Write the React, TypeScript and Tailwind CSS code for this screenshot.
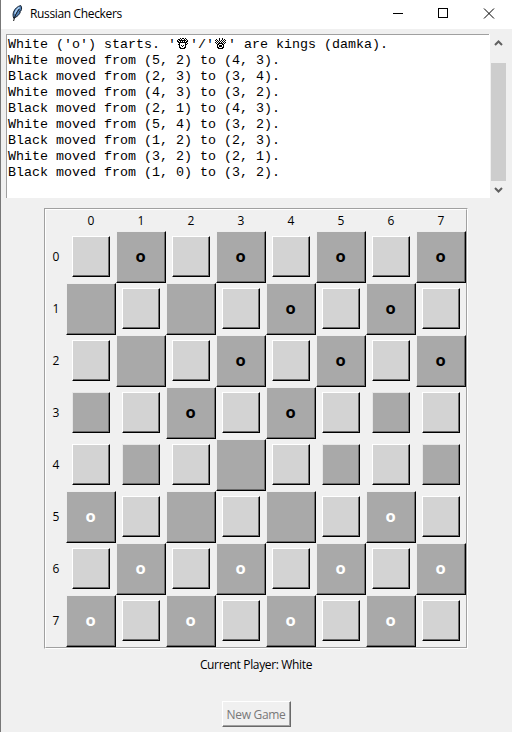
import React from "react";

const moves = [
  "White moved from (5, 2) to (4, 3).",
  "Black moved from (2, 3) to (3, 4).",
  "White moved from (4, 3) to (3, 2).",
  "Black moved from (2, 1) to (4, 3).",
  "White moved from (5, 4) to (3, 2).",
  "Black moved from (1, 2) to (2, 3).",
  "White moved from (3, 2) to (2, 1).",
  "Black moved from (1, 0) to (3, 2).",
];

// "." light square, "s" untouched dark square, "e" emptied dark square, "b"/"w" pieces
const board = [
  ".b.b.b.b",
  "e.e.b.b.",
  ".e.b.b.b",
  "s.b.b.s.",
  ".s.e.s.s",
  "w.e.e.w.",
  ".w.w.w.w",
  "w.w.w.w.",
];

function Pixels({ rows }: { rows: string[] }) {
  const d = rows
    .flatMap((row, y) => [...row].map((c, x) => (c === "#" ? `M${x} ${y}h1v1h-1z` : "")))
    .join("");
  return (
    <svg width={rows[0].length} height={rows.length} shapeRendering="crispEdges" className="block">
      <path d={d} fill="#000" />
    </svg>
  );
}

const whiteKing = [
  "...#.##.#..",
  ".##.#..#.#.",
  "#.#######.#",
  "##.#.#.#.##",
  ".#########.",
  "..#.....#.#",
  ".##.....##.",
  "..#.#.#.#..",
  "..#..#..#..",
  "..##...##..",
  "...#####...",
];

const blackKing = [
  "....#..#...",
  ".#..#..#.#.",
  "#.#.#.#.#.#",
  ".#.#.#.#.#.",
  "#.#.#.#.#.#",
  ".#.#####.#.",
  "..##...##..",
  "..#.###.#..",
  "..#.###.#..",
  "..##...##..",
  "...#####...",
];

function Feather() {
  return (
    <svg width="12" height="17" viewBox="0 0 12 17" className="block">
      <path d="M9.8.6C6.8 1 3.5 4 2.5 7.2c-.7 2.2-.5 4.2.2 6C6 12 8.8 9.4 9.3 6.8L8.5 6.5l1.6-.8C10.8 4 10.8 1.700 9.800.6Z" fill="#4f7fb5" stroke="#15202d" strokeWidth="1" />
      <path d="M8.500 2.200C6.500 3.500 4.500 6.500 4 9" fill="none" stroke="#a9cdf0" strokeWidth="1.400" />
      <path d="M8.300 4C5.800 7 3.600 11 2.600 16" fill="none" stroke="#111" strokeWidth="1" />
    </svg>
  );
}

function Square({ kind }: { kind: string }) {
  if (kind === "." || kind === "s") {
    const light = kind === ".";
    return (
      <div className="h-[52px] w-[50px] pl-[6px] pt-[5px]">
        <div className={`h-[41px] w-[38px] border border-r-black border-b-black ${light ? "border-t-white border-l-white" : "border-t-[#e6e6e6] border-l-[#e6e6e6]"}`}>
          <div className={`h-full w-full border-r border-b border-[#696969] ${light ? "bg-[#d3d3d3]" : "bg-[#a9a9a9]"}`} />
        </div>
      </div>
    );
  }
  return (
    <div className="h-[52px] w-[50px] border border-t-[#eeeeee] border-r-black border-b-black border-l-[#eeeeee]">
      <div className={`flex h-full w-full items-center justify-center border-r border-b border-[#696969] bg-[#a9a9a9] font-['Open_Sans',sans-serif] text-[16.5px] leading-[20px] font-bold ${kind === "w" ? "text-white" : "text-black"}`}>
        {kind !== "e" && <span className="-mt-px">o</span>}
      </div>
    </div>
  );
}

export default function App() {
  return (
    <div className="flex h-[732px] w-[512px] flex-col overflow-hidden border-l border-[#777777] bg-[#f0f0f0] font-['Open_Sans',sans-serif] text-[12px] text-black">
      <header className="flex h-[29px] shrink-0 items-center bg-white pl-[10px]">
        <div className="-mt-[3px]"><Feather /></div>
        <span className="-mt-px ml-[7px] w-[94px] whitespace-nowrap tracking-[-0.35px]">Russian Checkers</span>
        <svg width="120" height="29" viewBox="0 0 120 29" className="ml-[262px] block" fill="none" stroke="#000" strokeWidth="1">
          <path d="M7 13.500h10M52.500 8.500h9v9h-9z" shapeRendering="crispEdges" />
          <path d="M98 8.500l10 10M108 8.500l-10 10" />
        </svg>
      </header>

      <section className="mt-[5px] ml-[5px] flex h-[164px] shrink-0">
        <div className="w-[483px] overflow-hidden border-t border-l border-[#a0a0a0] bg-white pt-[2px] pl-px font-['Liberation_Mono',monospace] text-[13.333px] leading-[16px] whitespace-pre">
          <div className="flex h-[16px]">
            <span>{"White ('o') starts. '"}</span>
            <span className="mt-px w-[14px] pl-px"><Pixels rows={whiteKing} /></span>
            <span>'/'</span>
            <span className="mt-px w-[14px] pl-px"><Pixels rows={blackKing} /></span>
            <span>' are kings (damka).</span>
          </div>
          {moves.map((m) => <div key={m}>{m}</div>)}
        </div>
        <div className="flex w-[17px] flex-col items-center border-l border-white">
          <svg width="15" height="29" className="block shrink-0" fill="none" stroke="#606060" strokeWidth="2">
            <path d="M4 11l3.500-3.500L11 11" />
          </svg>
          <div className="h-[118px] w-[15px] bg-[#cdcdcd]" />
          <svg width="15" height="17" className="block shrink-0" fill="none" stroke="#606060" strokeWidth="2">
            <path d="M4 7l3.500 3.500L11 7" />
          </svg>
        </div>
      </section>

      <main className="mt-[10px] ml-[43px] h-[441px] w-[424px] shrink-0 border border-t-[#a0a0a0] border-r-white border-b-white border-l-[#a0a0a0]">
        <div className="h-full w-full border border-t-white border-r-[#a0a0a0] border-b-[#a0a0a0] border-l-white">
          <div className="flex h-[21px] pl-[20px]">
            {board.map((_, i) => (
              <div key={i} className="w-[50px] text-center leading-[21px]">{i}</div>
            ))}
          </div>
          {board.map((row, r) => (
            <div key={r} className="flex">
              <div className="w-[20px] text-center leading-[51px]">{r}</div>
              {[...row].map((kind, c) => <Square key={c} kind={kind} />)}
            </div>
          ))}
        </div>
      </main>

      <div className="mt-[7px] h-[18px] w-[510px] text-center leading-[18px] tracking-[-0.35px] whitespace-nowrap">Current Player: White</div>
      <div className="mt-[27px] ml-[221px] h-[26px] w-[69px] border border-t-white border-r-[#696969] border-b-[#696969] border-l-white">
        <div className="h-full w-full border-r border-b border-[#a0a0a0] text-center leading-[25px] tracking-[-0.3px] whitespace-nowrap text-[#787878]">New Game</div>
      </div>
    </div>
  );
}
